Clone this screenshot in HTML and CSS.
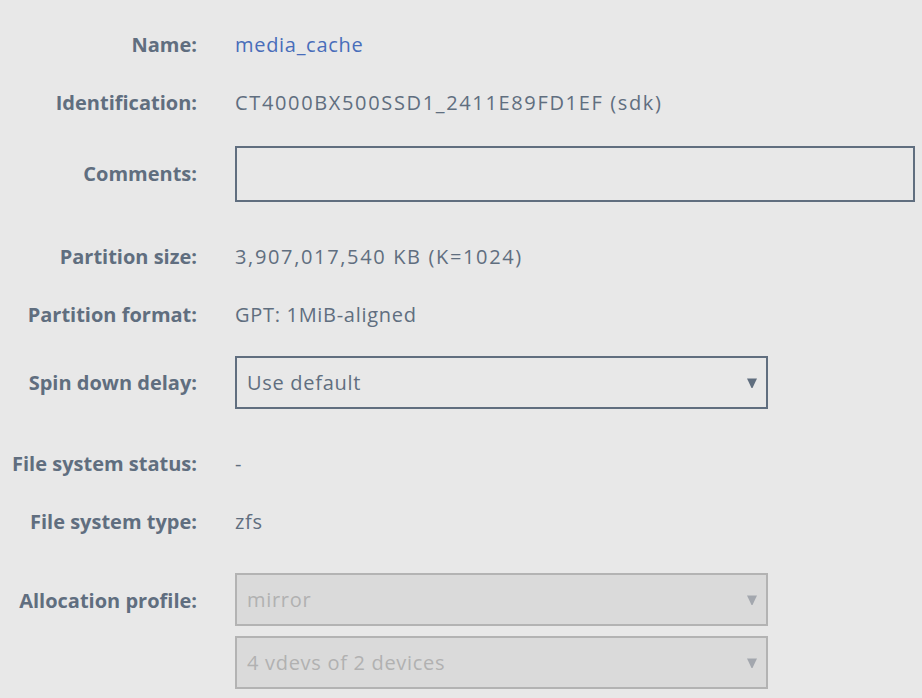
FILE: index.html
```html
<!DOCTYPE html>
<html>
<head>
<meta charset="utf-8">
<link rel="stylesheet" href="styles.css">
</head>
<body>
<form class="form">
  <div class="row">
    <div class="label">Name:</div>
    <div class="value"><a class="link" href="#">media_cache</a></div>
  </div>
  <div class="row">
    <div class="label">Identification:</div>
    <div class="value numeric">CT4000BX500SSD1_2411E89FD1EF (sdk)</div>
  </div>
  <div class="row row-input">
    <div class="label">Comments:</div>
    <div class="value"><input class="textbox" type="text"></div>
  </div>
  <div class="row">
    <div class="label">Partition size:</div>
    <div class="value numeric">3,907,017,540 KB (K=1024)</div>
  </div>
  <div class="row">
    <div class="label">Partition format:</div>
    <div class="value">GPT: 1MiB-aligned</div>
  </div>
  <div class="row row-input row-select">
    <div class="label">Spin down delay:</div>
    <div class="value">
      <div class="select"><span>Use default</span><svg class="arrow" width="10" height="10" viewBox="0 0 10 10"><path d="M0 0.5 H10 L5.5 10 H4.5 Z"/></svg></div>
    </div>
  </div>
  <div class="row">
    <div class="label">File system status:</div>
    <div class="value">-</div>
  </div>
  <div class="row">
    <div class="label">File system type:</div>
    <div class="value">zfs</div>
  </div>
  <div class="row row-stack">
    <div class="label label-tall">Allocation profile:</div>
    <div class="value stack">
      <div class="select disabled"><span>mirror</span><svg class="arrow" width="10" height="10" viewBox="0 0 10 10"><path d="M0 0.5 H10 L5.5 10 H4.5 Z"/></svg></div>
      <div class="select disabled"><span>4 vdevs of 2 devices</span><svg class="arrow" width="10" height="10" viewBox="0 0 10 10"><path d="M0 0.5 H10 L5.5 10 H4.5 Z"/></svg></div>
    </div>
  </div>
</form>
</body>
</html>
```
FILE: styles.css
```css
html, body {
  margin: 0;
  padding: 0;
  background: #e8e8e8;
}
body {
  font-family: "Open Sans", "Noto Sans", sans-serif;
  font-size: 20px;
  color: #606e7f;
}
.form {
  display: flex;
  flex-direction: column;
  gap: 28px;
  padding-top: 30px;
}
.row {
  display: flex;
  align-items: center;
  min-height: 30px;
  line-height: 30px;
}
.row-input {
  margin-bottom: 12px;
}
.row-select {
  margin-top: -2px;
}
.row-stack {
  align-items: flex-start;
  margin-top: 8px;
}
.label {
  width: 197px;
  flex: none;
  text-align: right;
  font-weight: 700;
  margin-right: 38px;
  white-space: nowrap;
}
.label-tall {
  line-height: 55px;
}
.value {
  white-space: nowrap;
  letter-spacing: 0.7px;
}
.value.numeric {
  letter-spacing: 1.65px;
}
.link {
  color: #486dba;
  text-decoration: none;
}
.textbox {
  box-sizing: border-box;
  width: 680px;
  height: 56px;
  margin: 0;
  border: 2px solid #606e7f;
  background: transparent;
  outline: none;
  font: inherit;
  padding: 0 10px;
}
.stack {
  display: flex;
  flex-direction: column;
  gap: 10px;
}
.select {
  box-sizing: border-box;
  width: 533px;
  height: 53px;
  border: 2px solid #606e7f;
  display: flex;
  align-items: center;
  justify-content: space-between;
  padding: 0 9px 0 10px;
  color: #606e7f;
}
.select .arrow {
  fill: #606e7f;
  margin-top: 1px;
}
.select.disabled {
  border-color: #b3b3b3;
  background: #dadada;
  color: #b1b1b1;
}
.select.disabled .arrow {
  fill: #a3a7ae;
}
```
